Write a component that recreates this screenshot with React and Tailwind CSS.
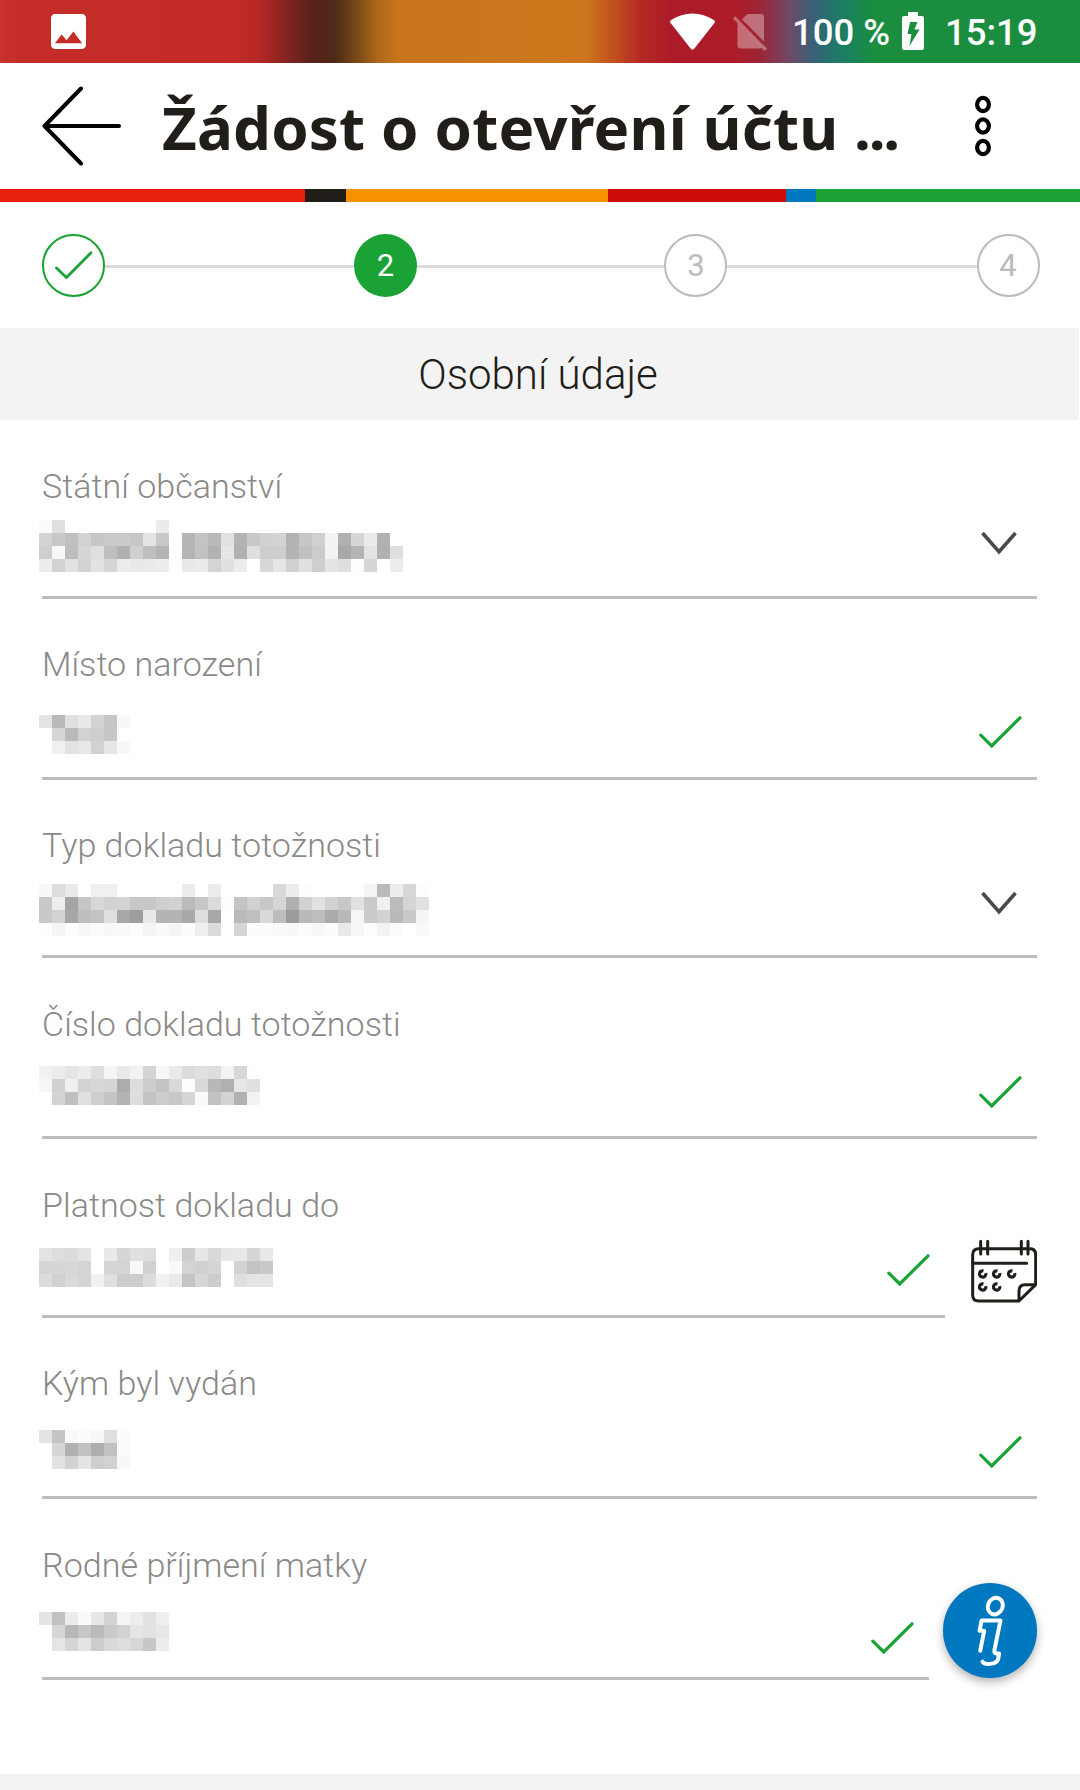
const fields = [
  {
    label: "Státní občanství",
    icon: "chevron",
    box: "h-[179px] pt-[46px]",
    gap: "mt-[14px]",
    iconBox: "mr-[20px] mb-[41px]",
    value: [
      "fb df ff ff ff ff ff ff ff eb ff ff ff ff ff ff ff ff ff ff ff ff ff ff ff ff ff ff",
      "d3 c8 c0 d2 c6 ca cb c6 e4 c8 ff b6 c3 ba e1 b3 c9 d1 d3 b3 c6 d0 f3 b0 d6 eb b1 ff",
      "cf f8 bd d6 df bf b0 cf bf b4 ff b4 c1 b2 e6 b1 df cd ce b4 c0 cb f3 a8 b4 e3 b1 df",
      "ed d3 e2 d3 e2 d6 ec e9 ea ed fd e9 eb d4 e0 ec ff d8 e5 d1 e0 ce e4 df fe d6 ff ed",
    ],
  },
  {
    label: "Místo narození",
    icon: "check",
    box: "h-[181px] pt-[45px]",
    gap: "mt-[31px]",
    iconBox: "mr-[15px] mb-[29px]",
    value: ["e4 b9 e0 e9 d3 c6 f8", "ff d6 ba d2 ce c7 ff", "ff f0 e2 e8 d2 e6 f8"],
  },
  {
    label: "Typ dokladu totožnosti",
    icon: "chevron",
    box: "h-[178px] pt-[45px]",
    gap: "mt-[19px]",
    iconBox: "mr-[20px] mb-[40px]",
    value: [
      "f7 dd ea ff f0 f0 ff ff ff ff ff ec ff ec ff ff ff ff d9 ed fd ff ff ff ff f5 ba ed d7 fd",
      "c9 ee a5 c6 d8 d2 d3 c7 c7 ce d2 bb c7 db fd c4 d2 c8 d6 af d2 e1 d2 c7 e1 c9 f0 bb d5 e1",
      "c9 d3 a7 be c3 df a8 9e e9 b4 b4 a9 dd a8 ff ba bf d9 bd 9b b9 bd ab b8 f6 cb d3 b9 c9 f5",
      "fd f5 fc f7 fc f8 f9 fc f5 fa f5 fc ef db ff d5 fc fc f9 f8 fc f8 fc e9 f6 fd f3 fb ff f9",
    ],
  },
  {
    label: "Číslo dokladu totožnosti",
    icon: "check",
    box: "h-[181px] pt-[46px]",
    gap: "mt-[22px]",
    iconBox: "mr-[15px] mb-[28px]",
    value: [
      "f2 ec e5 ec de f5 e9 f2 d4 f8 e9 dc e1 dd f3 d7 fe",
      "f7 d1 ef d3 d8 d5 ac dd cd c3 d9 fe d9 b8 b0 e6 e0",
      "ff d3 bf df cf c4 b3 dd c3 cc c8 d5 fa c2 d3 b1 f2",
    ],
  },
  {
    label: "Platnost dokladu do",
    icon: "check",
    box: "h-[179px] pt-[46px]",
    gap: "mt-[23px]",
    iconBox: "mr-[15px] mb-[29px]",
    calendar: true,
    value: [
      "e4 dd dc e4 ff e9 d6 e0 dd ff ef cd e6 d9 e7 e8 d6 e8",
      "d5 d6 d7 d4 ff d4 d4 f8 d1 ff f9 d4 d1 d5 ff d2 c3 c9",
      "dc d1 da d5 f2 df cd cd dc f2 e9 c4 d7 cc ff df e4 e4",
    ],
  },
  {
    label: "Kým byl vydán",
    icon: "check",
    box: "h-[181px] pt-[45px]",
    gap: "mt-[27px]",
    iconBox: "mr-[15px] mb-[28px]",
    value: ["e4 c5 f8 fc f7 df fc", "ff d6 b0 c1 ae c1 fc", "ff e2 d2 e4 ce d2 f8"],
  },
  {
    label: "Rodné příjmení matky",
    icon: "check",
    box: "h-[181px] pt-[46px] mr-[108px]",
    gap: "mt-[27px]",
    iconBox: "mr-[15px] mb-[23px]",
    value: [
      "e4 c1 ec fa e7 d3 f5 ed e2 ef",
      "ff d6 b8 c6 bb ca d2 e5 e2 e8",
      "ff e5 d5 e4 cd d9 dd d7 c7 ec",
    ],
  },
];

// value hidden behind 13px blocks, one grey level per block
function MaskedValue({ rows }) {
  return (
    <div className="-ml-[3px]">
      {rows.map((row, i) => (
        <div key={i} className="flex">
          {row.split(" ").map((g, j) => (
            <div key={j} className="h-[13px] w-[13px]" style={{ backgroundColor: `#${g}${g}${g}` }} />
          ))}
        </div>
      ))}
    </div>
  );
}

function Check() {
  return (
    <svg className="h-[32px] w-[43px]" viewBox="0 0 43 32" fill="none" stroke="#1ba235" strokeWidth="3.2" strokeLinecap="round">
      <path d="M1.8 19.2 12.7 30 41 1.8" />
    </svg>
  );
}

function Chevron() {
  return (
    <svg className="h-[24px] w-[36px]" viewBox="0 0 36 24" fill="none" stroke="#4a4a4a" strokeWidth="3.6">
      <path d="M1.5 2 18 20.8 34.5 2" />
    </svg>
  );
}

function Calendar() {
  return (
    <svg className="h-[64px] w-[66px]" viewBox="393 56 198 190" fill="none" stroke="#211d18" strokeWidth="9">
      <path d="M537 241H416Q398 241 398 223V102Q398 84 416 84H569Q587 84 587 102V192L537 241V210Q537 192 555 192H587" strokeLinejoin="round" />
      <path d="M398 128H560M422 62V100M443 62V100M544 62V100M564 62V100" strokeLinecap="round" />
      <g strokeWidth="9.5">
        <path d="M430.400 150.800A9.500 9.500 0 1 0 437.100 157.500" />
        <path d="M472.400 150.800A9.500 9.500 0 1 0 479.100 157.500" />
        <path d="M517.400 150.800A9.500 9.500 0 1 0 524.100 157.500" />
        <path d="M430.400 189.800A9.500 9.500 0 1 0 437.100 196.500" />
        <path d="M472.400 189.800A9.500 9.500 0 1 0 479.100 196.500" />
      </g>
    </svg>
  );
}

function Field({ label, icon, box, gap, iconBox, value, calendar }) {
  return (
    <div className="flex items-end">
      <div className={`flex flex-1 justify-between border-b-[3px] border-[#bdbdbd] ${box}`}>
        <div>
          <div className="h-[40px] text-[34px] leading-[40px] font-light tracking-[0.05px] whitespace-nowrap text-[#8a8987]">{label}</div>
          <div className={gap}>
            <MaskedValue rows={value} />
          </div>
        </div>
        <div className={`self-end ${iconBox}`}>{icon === "check" ? <Check /> : <Chevron />}</div>
      </div>
      {calendar && (
        <button className="mb-[15px] ml-[26px]">
          <Calendar />
        </button>
      )}
    </div>
  );
}

function StatusBar() {
  return (
    <div className="flex h-[63px] items-start bg-[linear-gradient(90deg,#c8342f_0px,#c42c27_20px,#c42b26_230px,#b52826_260px,#7d2320_290px,#55211b_315px,#4f2a18_335px,#7a4a18_358px,#b0681a_378px,#c9761c_400px,#cc771c_585px,#c4581d_608px,#b52a24_640px,#ad1b29_670px,#ad1b29_735px,#9b2636_760px,#6d4a67_790px,#3c6077_812px,#24726e_830px,#1a8260_848px,#1a8d3f_872px,#1a8d3f_1080px)] text-[36.5px] leading-[42px] font-medium text-white">
      <svg className="mt-[14px] ml-[51px] h-[35px] w-[35px]" viewBox="3 3 18 18" fill="currentColor">
        <path d="M21 19V5c0-1.100-.9-2-2-2H5c-1.100 0-2 .9-2 2v14c0 1.100.9 2 2 2h14c1.100 0 2-.9 2-2zM8.500 13.500l2.500 3.010L14.500 12l4.500 6H5l3.500-4.500z" />
      </svg>
      <svg className="mt-[13px] ml-[584px] h-[37px] w-[45px]" viewBox="0 0 45 36" fill="currentColor">
        <path d="M0.600 9.500C-.3 8.300 0 7.300 1.200 6.500C7.500 2.200 15 0 22.500 0C30 0 37.500 2.200 43.800 6.500C45 7.300 45.300 8.300 44.400 9.500L24.200 35.200Q22.500 37 20.800 35.200Z" />
      </svg>
      <svg className="mt-[14px] ml-[18px] h-[38px] w-[34px]" viewBox="0 0 34 38" fill="#fff" fillOpacity=".35">
        <path d="M9 5.500 13.500.8Q14.300 0 15.500 0H28Q31 0 31 3V27.500L9 5.500ZM4.500 9 28.500 33.300 28 34.500H7.500Q4.500 34.500 4.500 31.500Z" />
        <path d="M0 4.500 2.200 2.300 34 34.700 31.800 37Z" />
      </svg>
      <span className="mt-[12px] ml-[25px] w-[98px] whitespace-nowrap">100 %</span>
      <svg className="mt-[12px] ml-[12px] h-[38px] w-[22px]" viewBox="0 0 22 38" fill="currentColor">
        <path fillRule="evenodd" d="M6 0H16V4H20Q22 4 22 6V36Q22 38 20 38H2Q0 38 0 36V6Q0 4 2 4H6ZM8 10 5.500 22H9.500L7.500 34 17.500 17.500H12.500L15.500 10Z" />
      </svg>
      <span className="mt-[12px] ml-[21px] whitespace-nowrap">15:19</span>
    </div>
  );
}

function Header() {
  return (
    <div className="flex h-[126px] items-center">
      <svg className="ml-[42px] h-[80px] w-[79px] shrink-0" viewBox="0 0 79 80" fill="none" stroke="#000" strokeWidth="4" strokeLinecap="round" strokeLinejoin="round">
        <path d="M77 40H2.500M39 2.500 2.500 40 39 77.500" />
      </svg>
      <h1 className="mt-[2px] ml-[41px] w-[750px] font-['Noto_Sans','Open_Sans',sans-serif] text-[60px] leading-[80px] font-bold tracking-[0.18px] whitespace-nowrap text-[#211d18]">
        Žádost o otevření účtu <span className="tracking-[-2.3px]">...</span>
      </h1>
      <svg className="ml-[63px] h-[62px] w-[16px] shrink-0" viewBox="0 0 16 62" fill="none" stroke="#000" strokeWidth="4.200">
        <ellipse cx="8" cy="9.500" rx="5.900" ry="6.600" />
        <ellipse cx="8" cy="31" rx="5.900" ry="6.600" />
        <ellipse cx="8" cy="52.500" rx="5.900" ry="6.600" />
      </svg>
    </div>
  );
}

function Steps() {
  return (
    <div className="flex h-[126px] items-center pr-[40.5px] pl-[42px] text-[31px]">
      <div className="flex h-[63px] w-[63px] items-center justify-center rounded-full border-[2.500px] border-[#1ba235]">
        <svg className="h-[28px] w-[38px]" viewBox="0 0 38 28" fill="none" stroke="#1ba235" strokeWidth="2.800" strokeLinecap="round">
          <path d="M1.500 17 11.500 26.500 36 1.800" />
        </svg>
      </div>
      <div className="mt-[3px] h-[3px] w-[249px] bg-[#dcdcdc]" />
      <div className="flex h-[63px] w-[63px] items-center justify-center rounded-full bg-[#1ba235] pt-[2px] text-white">2</div>
      <div className="mt-[3px] h-[3px] w-[247px] bg-[#dcdcdc]" />
      <div className="flex h-[63px] w-[63px] items-center justify-center rounded-full border-[2.500px] border-[#bbb] pt-[2px] pl-px text-[#bbb]">3</div>
      <div className="mt-[3px] h-[3px] flex-1 bg-[#dcdcdc]" />
      <div className="flex h-[63px] w-[63px] items-center justify-center rounded-full border-[2.500px] border-[#bbb] pt-[2px] text-[#bbb]">4</div>
    </div>
  );
}

function App() {
  return (
    <div className="relative flex h-[1790px] w-[1080px] flex-col overflow-hidden bg-white font-[Roboto,sans-serif]">
      <StatusBar />
      <Header />

      <div className="flex h-[13px]">
        <div className="w-[305px] bg-[#e71f0c]" />
        <div className="w-[41px] bg-[#211d18]" />
        <div className="w-[262px] bg-[#f69200]" />
        <div className="w-[178px] bg-[#cd0c0a]" />
        <div className="w-[30px] bg-[#0078c0]" />
        <div className="flex-1 bg-[#1ba235]" />
      </div>

      <Steps />

      <div className="mr-px flex h-[92px] items-center justify-center bg-[#f3f3f3] pr-[3px] text-[42px] font-light text-[#211d18]">
        Osobní údaje
      </div>

      <div className="pr-[43px] pl-[42px]">
        {fields.map((f) => (
          <Field key={f.label} {...f} />
        ))}
      </div>

      <div className="mt-auto h-[16px] bg-[#f3f3f3]" />

      {/* floating help button */}
      <button className="absolute top-[1583px] left-[942.5px] h-[94.5px] w-[94.5px] rounded-full bg-[#0078c0] shadow-[0_4px_10px_rgba(0,0,0,0.3)]">
        <svg className="h-[94px] w-[94px]" viewBox="308 69 283 283" fill="none" stroke="#fff" strokeWidth="12" strokeLinecap="round" strokeLinejoin="round">
          <ellipse cx="465.500" cy="138.500" rx="22" ry="25.500" transform="rotate(24 465.500 138.500)" />
          <path d="M420 273 432 213H418L424 182H481L463 270Q461 281 469 281H477L474 298Q471 311 450 312.500Q432 314 427 306" />
        </svg>
      </button>
    </div>
  );
}

export default App;
